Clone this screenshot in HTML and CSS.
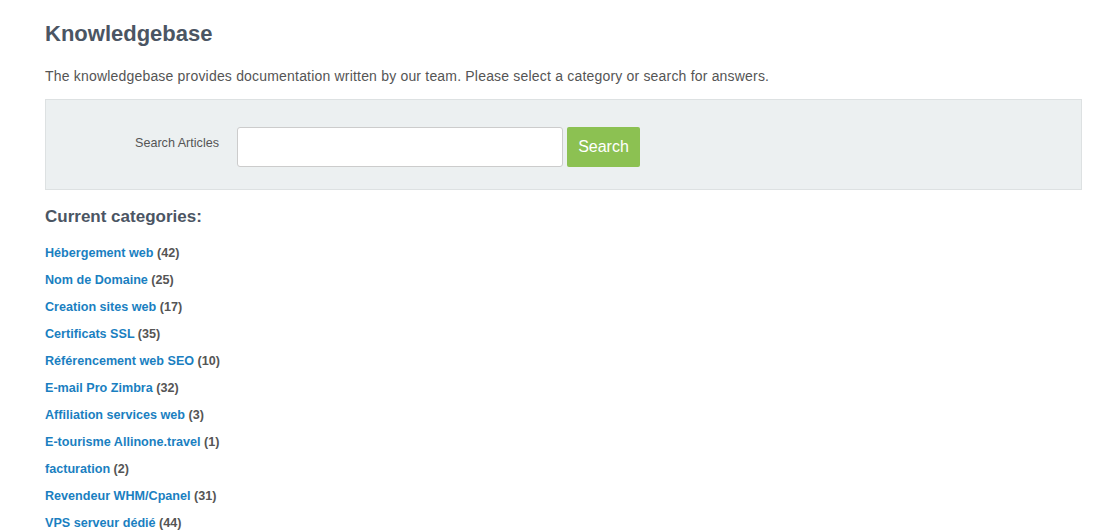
FILE: index.html
```html
<!DOCTYPE html>
<html lang="en">
<head>
<meta charset="UTF-8">
<title>Knowledgebase</title>
<link rel="stylesheet" href="styles.css">
</head>
<body>
<div class="page">
  <h1 class="kb-title">Knowledgebase</h1>
  <p class="kb-intro">The knowledgebase provides documentation written by our team. Please select a category or search for answers.</p>

  <!-- Search -->
  <form class="kb-search">
    <label class="kb-label" for="search">Search Articles</label>
    <input class="kb-input" id="search" type="text">
    <button class="kb-btn" type="button">Search</button>
  </form>

  <!-- Categories -->
  <h2 class="kb-heading">Current categories:</h2>
  <ul class="kb-cats">
    <li><a href="#">Hébergement web</a> (42)</li>
    <li><a href="#">Nom de Domaine</a> (25)</li>
    <li><a href="#">Creation sites web</a> (17)</li>
    <li><a href="#">Certificats SSL</a> (35)</li>
    <li><a href="#">Référencement web SEO</a> (10)</li>
    <li><a href="#">E-mail Pro Zimbra</a> (32)</li>
    <li><a href="#">Affiliation services web</a> (3)</li>
    <li><a href="#">E-tourisme Allinone.travel</a> (1)</li>
    <li><a href="#">facturation</a> (2)</li>
    <li><a href="#">Revendeur WHM/Cpanel</a> (31)</li>
    <li><a href="#">VPS serveur dédié</a> (44)</li>
  </ul>
</div>
</body>
</html>
```

FILE: styles.css
```css
:root {
  --text:#555;
  --title:#4b5563;
  --link:#1a7fc1;
  --green:#8cc152;
}

html, body {
  margin:0; padding:0;
  background:#fff;
  color:var(--text);
  font-family:'Liberation Sans', Arial, sans-serif;
}

.page {padding:0 30px 0 45px;}

/* Header */
.kb-title {margin:0; padding-top:21px; font-size:22px; line-height:26px; font-weight:700; color:var(--title);}
.kb-intro {margin:21px 0 0; font-size:14px; line-height:16px; letter-spacing:0.19px;}

/* Search */
.kb-search {
  margin-top:15px;
  height:89px;
  background:#ecf0f1;
  border:1px solid #dde1e2;
  display:flex; align-items:center;
}
.kb-label {width:173px; text-align:right; font-size:12.6px; color:var(--text); margin-right:18px; margin-bottom:4px;}
.kb-input {
  width:326px; height:40px; box-sizing:border-box;
  border:1px solid #ccc; border-radius:3px; background:#fff;
  margin-right:4px; margin-top:4px;
}
.kb-btn {
  width:73px; height:40px;
  border:none; border-radius:2px;
  background:var(--green); color:#fff;
  font-family:inherit; font-size:16px;
  cursor:pointer; margin-top:4px;
}

/* Categories */
.kb-heading {margin:18px 0 0; font-size:17px; line-height:18px; font-weight:700; color:var(--title);}
.kb-cats {list-style:none; margin:14px 0 0; padding:0;}
.kb-cats li {font-size:12.6px; font-weight:700; line-height:27px;}
.kb-cats a {color:var(--link); text-decoration:none;}
```
